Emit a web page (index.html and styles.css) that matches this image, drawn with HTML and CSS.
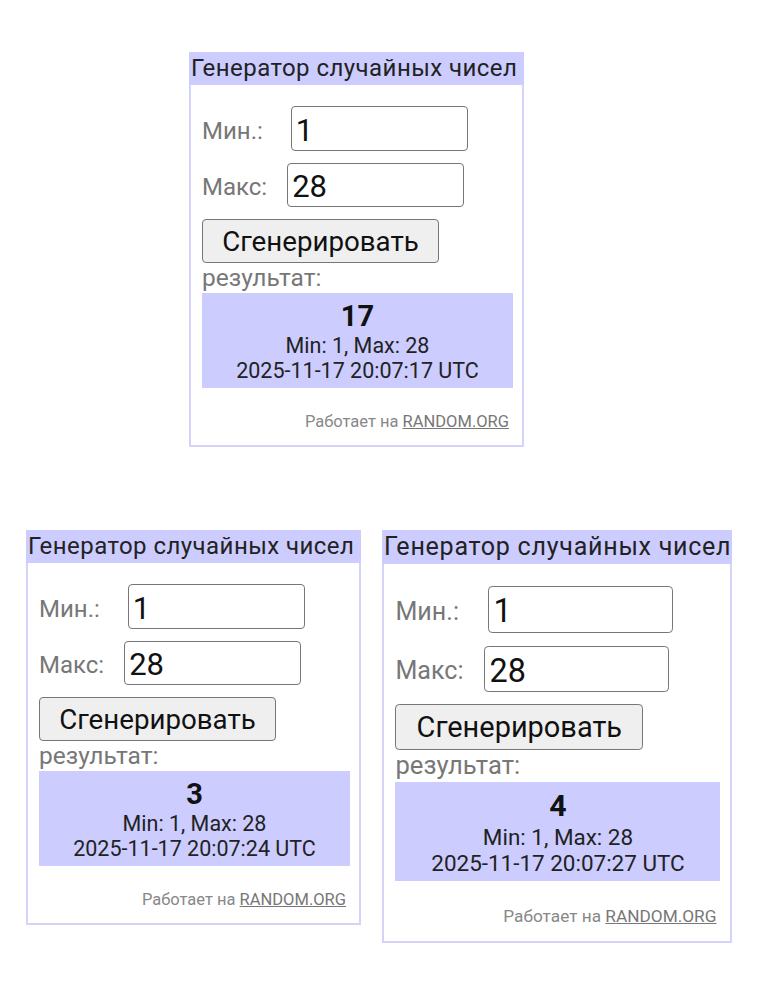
FILE: index.html
```html
<!DOCTYPE html>
<html lang="ru">
<head>
    <meta charset="UTF-8">
    <title>Генератор случайных чисел</title>
    <link rel="stylesheet" href="styles.css">
</head>
<body>
<div class="page">
    <!-- first run -->
    <div class="row row-top">
        <div class="rng">
            <div class="rng-title">Генератор случайных чисел</div>
            <div class="rng-body">
                <div class="rng-row"><span class="rng-label">Мин.:</span><input class="rng-input rng-min" value="1"></div>
                <div class="rng-row"><span class="rng-label">Макс:</span><input class="rng-input rng-max" value="28"></div>
                <button class="rng-btn">Сгенерировать</button>
                <div class="rng-caption">результат:</div>
                <div class="rng-result">
                    <div class="rng-num">17</div>
                    <div>Min: 1, Max: 28</div>
                    <div>2025-11-17 20:07:17 UTC</div>
                </div>
                <div class="rng-foot">Работает на <a href="#">RANDOM.ORG</a></div>
            </div>
        </div>
    </div>
    <!-- second and third run -->
    <div class="row row-bottom">
        <div class="rng">
            <div class="rng-title">Генератор случайных чисел</div>
            <div class="rng-body">
                <div class="rng-row"><span class="rng-label">Мин.:</span><input class="rng-input rng-min" value="1"></div>
                <div class="rng-row"><span class="rng-label">Макс:</span><input class="rng-input rng-max" value="28"></div>
                <button class="rng-btn">Сгенерировать</button>
                <div class="rng-caption">результат:</div>
                <div class="rng-result">
                    <div class="rng-num">3</div>
                    <div>Min: 1, Max: 28</div>
                    <div>2025-11-17 20:07:24 UTC</div>
                </div>
                <div class="rng-foot">Работает на <a href="#">RANDOM.ORG</a></div>
            </div>
        </div>
        <div class="rng rng-big">
            <div class="rng-title">Генератор случайных чисел</div>
            <div class="rng-body">
                <div class="rng-row"><span class="rng-label">Мин.:</span><input class="rng-input rng-min" value="1"></div>
                <div class="rng-row"><span class="rng-label">Макс:</span><input class="rng-input rng-max" value="28"></div>
                <button class="rng-btn">Сгенерировать</button>
                <div class="rng-caption">результат:</div>
                <div class="rng-result">
                    <div class="rng-num">4</div>
                    <div>Min: 1, Max: 28</div>
                    <div>2025-11-17 20:07:27 UTC</div>
                </div>
                <div class="rng-foot">Работает на <a href="#">RANDOM.ORG</a></div>
            </div>
        </div>
    </div>
</div>
</body>
</html>
```

FILE: styles.css
```css
body {margin:0;background:#fff;font-family:Roboto, "Noto Sans", sans-serif;}
.page {padding-top:52px;}
.row {display:flex;align-items:flex-start;}
.row-top {padding-left:189px;}
.row-bottom {margin-top:83px;padding-left:26px;gap:21px;}

/* widget box */
.rng {width:335px;box-sizing:border-box;border:2px solid #d4d4fb;border-top:0;background:#fff;}
.rng-big {zoom:1.045;}
.rng-title {height:33px;line-height:33px;background:#ccccff;color:#222;font-size:24px;letter-spacing:0.45px;
    white-space:nowrap;padding-left:2px;margin:0 -2px;}
.rng-big .rng-title {letter-spacing:0.7px;}
.rng-body {padding:21px 13px 13px 11px;}
.rng-row {display:flex;align-items:center;margin-bottom:12px;}
.rng-label {color:#777;font-size:24px;line-height:26px;padding-top:4px;}
.rng-input {width:177px;height:45px;box-sizing:border-box;border:1.5px solid #767676;border-radius:4px;
    font-family:inherit;font-size:31px;color:#111;padding:3px 4px 0;background:#fff;}
.rng-min {margin-left:28px;}
.rng-max {margin-left:20px;height:44px;}
.rng-btn {display:block;width:237px;height:44px;border:1.5px solid #767676;border-radius:4px;background:#efefef;
    font-family:inherit;font-size:27.7px;color:#111;padding:0;}
.rng-caption {color:#777;font-size:24.5px;line-height:30px;}
.rng-result {width:311px;box-sizing:border-box;background:#ccccff;text-align:center;color:#222;
    font-size:21.5px;line-height:25px;padding:6px 0 5px;}
.rng-num {font-size:29px;line-height:34px;font-weight:bold;color:#111;}
.rng-foot {margin-top:24px;text-align:right;color:#888;font-size:16.5px;line-height:20px;}
.rng-foot a {color:#777;}
```
